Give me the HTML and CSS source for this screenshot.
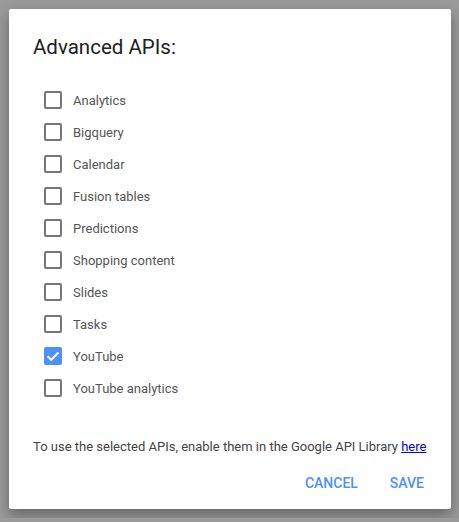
FILE: index.html
```html
<!doctype html>
<html lang="en">
<head>
    <meta charset="UTF-8">
    <title>Advanced APIs</title>
    <link rel="stylesheet" href="styles.css">
</head>
<body>
<div class="dialog">
    <h3 class="title">Advanced APIs:</h3>
    <ul class="apis">
        <li><span class="box"></span>Analytics</li>
        <li><span class="box"></span>Bigquery</li>
        <li><span class="box"></span>Calendar</li>
        <li><span class="box"></span>Fusion tables</li>
        <li><span class="box"></span>Predictions</li>
        <li><span class="box"></span>Shopping content</li>
        <li><span class="box"></span>Slides</li>
        <li><span class="box"></span>Tasks</li>
        <li><span class="box checked">
            <svg width="18" height="18" viewBox="0 0 18 18"><path d="M3.5 9.2 L7.2 12.8 L14.5 5.5" fill="none" stroke="#fff" stroke-width="2"/></svg>
        </span>YouTube</li>
        <li><span class="box"></span>YouTube analytics</li>
    </ul>
    <p class="note">To use the selected APIs, enable them in the Google API Library <a href="#">here</a></p>
    <div class="actions">
        <span>CANCEL</span>
        <span>SAVE</span>
    </div>
</div>
</body>
</html>
```

FILE: styles.css
```css
body{
    margin: 0;
    background-color: #9a9a9a;
    font-family: Roboto, "Liberation Sans", sans-serif;
}
.dialog{
    width: 442px;
    height: 500px;
    margin: 9px;
    box-sizing: border-box;
    padding: 0 24px;
    background-color: #fff;
    border-radius: 2px;
    box-shadow: 0 6px 14px rgba(0,0,0,0.35);
    display: flex;
    flex-direction: column;
}
.title{
    margin: 0;
    padding-top: 26px;
    font-size: 20.5px;
    line-height: 24px;
    font-weight: normal;
    color: #212121;
}
.apis{
    list-style: none;
    margin: 0;
    padding: 25px 0 0 11px;
}
.apis li{
    height: 32px;
    display: flex;
    align-items: center;
    font-size: 13px;
    color: #555;
}
.box{
    width: 18px;
    height: 18px;
    box-sizing: border-box;
    border: 2px solid #757575;
    border-radius: 2px;
    margin-right: 11px;
}
.box.checked{
    border: none;
    background-color: #4d90fe;
}
.box svg{
    display: block;
}
.note{
    margin: 35px 0 0;
    font-size: 13px;
    color: #444;
}
.note a{
    color: #0000ee;
}
.actions{
    display: flex;
    justify-content: flex-end;
    gap: 32px;
    margin-top: 21px;
    padding-right: 3px;
}
.actions span{
    font-size: 14px;
    font-weight: 500;
    color: #4d90fe;
    cursor: pointer;
}
```
